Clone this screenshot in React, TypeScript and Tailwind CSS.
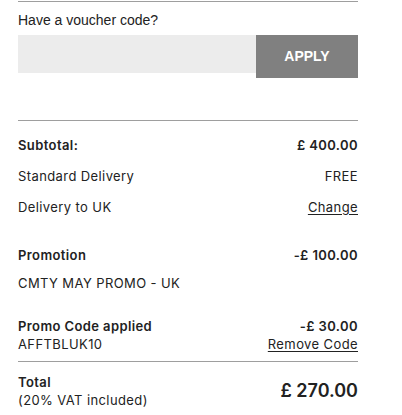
export default function App() {
  return (
    <div className="bg-white w-[402px] h-[415px] overflow-hidden text-[#222]">
      <div className="ml-[18px] w-[340px] pt-px">
        <div className="border-t border-[#9e9e9e]" />

        {/* voucher */}
        <p className="mt-[9px] text-[14px] leading-[18px] font-['Liberation_Sans',Arial,sans-serif] text-[#222]">
          Have a voucher code?
        </p>
        <div className="mt-[6px] flex items-start">
          <input className="flex-1 h-[38px] bg-[#ececec] outline-none px-3 text-[14px]" />
          <button className="w-[102px] h-[43px] bg-[#808080] text-white text-[14px] font-bold font-['Liberation_Sans',Arial,sans-serif]">
            APPLY
          </button>
        </div>

        <div className="mt-[42px] border-t border-[#9e9e9e]" />

        <div className="pt-[9px] font-['Inter',sans-serif] text-[13px] tracking-[0.4px]">
          <Row label="Subtotal:" value="£ 400.00" bold />
          <Row label="Standard Delivery" value="FREE" />
          <Row label="Delivery to UK" value={<span className="underline underline-offset-2">Change</span>} />

          <div className="mt-[17px]">
            <Row label="Promotion" value="-£ 100.00" bold />
          </div>
          <p className="mt-[3px] leading-[18px]">CMTY MAY PROMO - UK</p>

          <div className="mt-[25px] flex justify-between leading-[18px]">
            <div>
              <p className="font-semibold">Promo Code applied</p>
              <p>AFFTBLUK10</p>
            </div>
            <div className="text-right">
              <p className="font-semibold">-£ 30.00</p>
              <p className="underline underline-offset-2">Remove Code</p>
            </div>
          </div>

          <div className="mt-[8px] border-t border-[#9e9e9e]" />

          <div className="pt-[11px] flex justify-between items-center leading-[18px]">
            <div>
              <p className="font-semibold">Total</p>
              <p>(20% VAT included)</p>
            </div>
            <p className="text-[18px] font-semibold tracking-normal">£ 270.00</p>
          </div>
        </div>
      </div>
    </div>
  );
}

function Row({ label, value, bold }: { label: string; value: React.ReactNode; bold?: boolean }) {
  return (
    <div className="h-[31px] flex items-center justify-between">
      <span className={bold ? 'font-semibold' : ''}>{label}</span>
      <span className={bold ? 'font-semibold' : ''}>{value}</span>
    </div>
  );
}
